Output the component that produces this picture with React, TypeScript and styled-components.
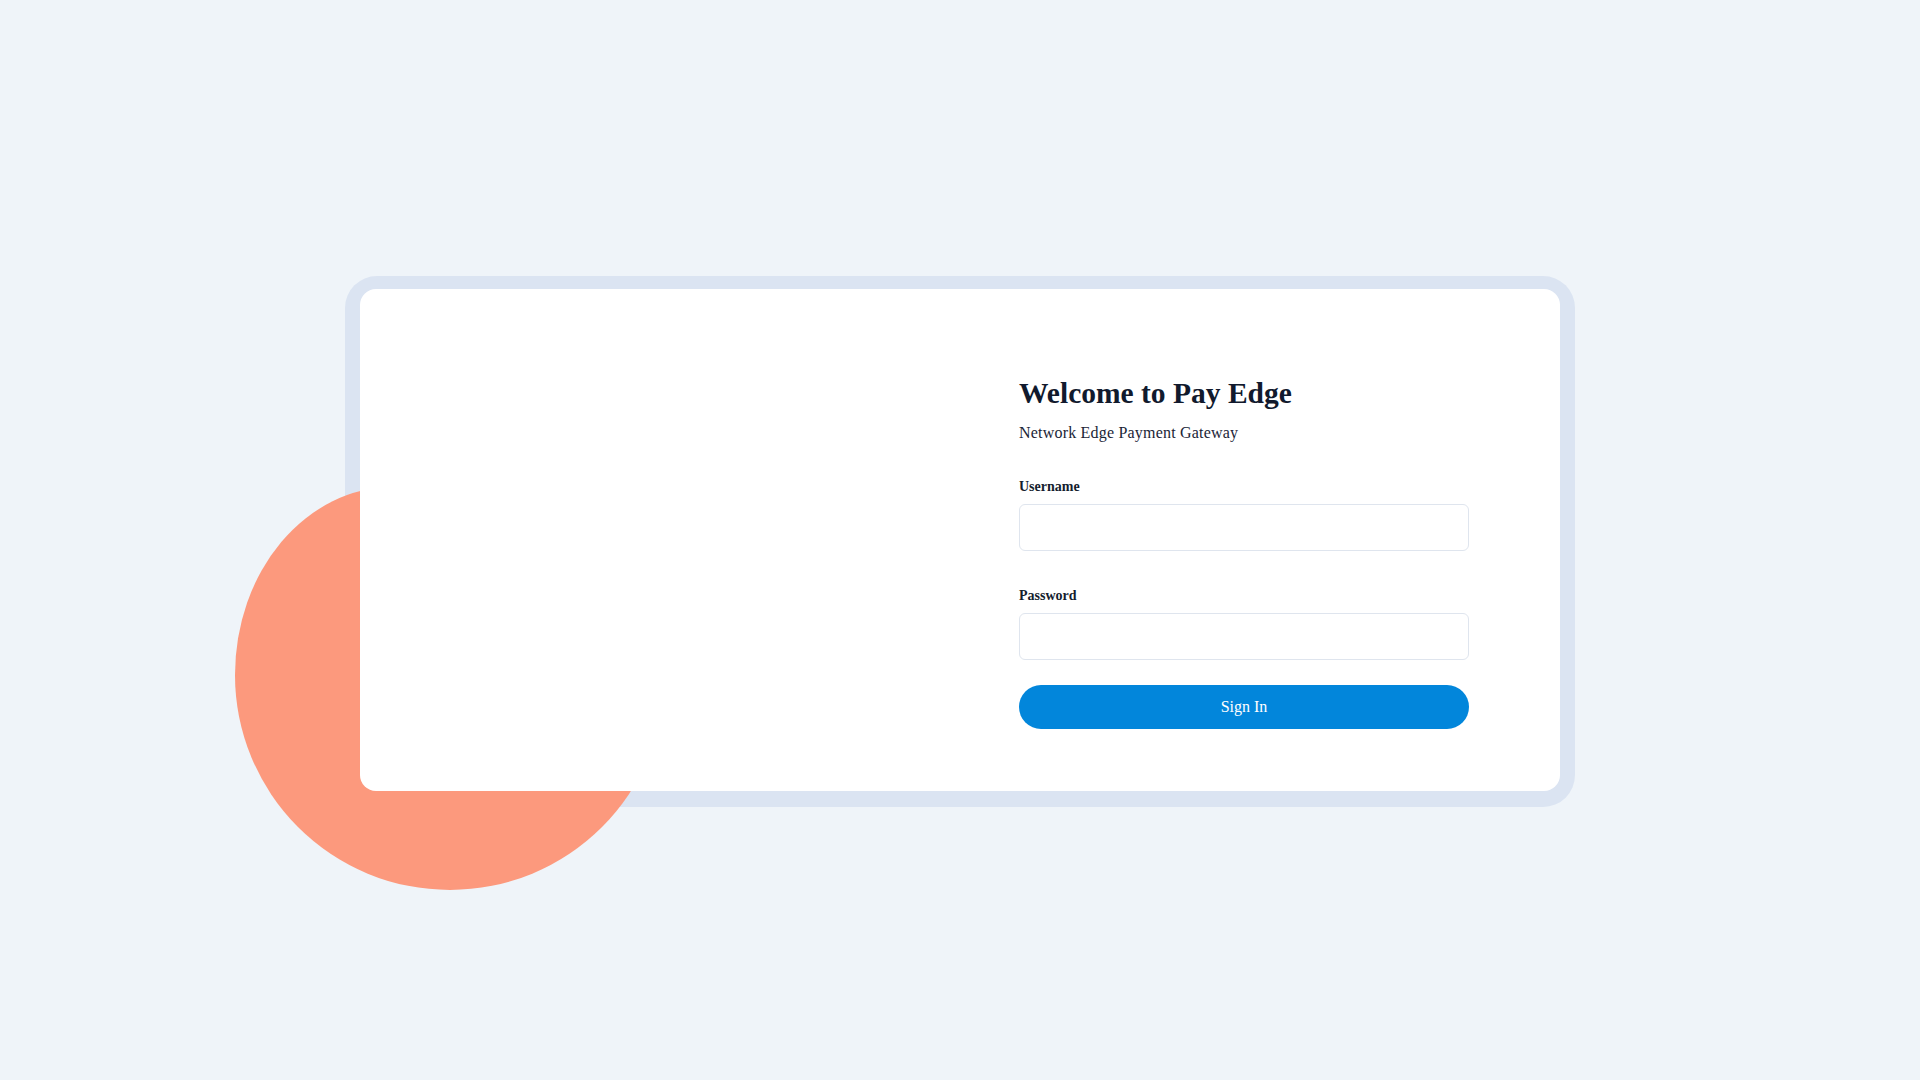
import React from "react";
import styled, { createGlobalStyle } from "styled-components";

const GlobalStyle = createGlobalStyle`
  * { box-sizing: border-box; }
  html, body { margin: 0; padding: 0; }
  body {
    background: #eff4f9;
    font-family: "Liberation Serif", "Times New Roman", serif;
  }
`;

const Page = styled.main`
  min-height: 100vh;
  padding-top: 3px;
  display: flex;
  align-items: center;
  justify-content: center;
`;

const Frame = styled.div`
  position: relative;
  padding: 13px 15px 16px 15px;
  background: #dbe4f2;
  border-radius: 32px;
`;

const Blob = styled.div`
  position: absolute;
  left: -110px;
  top: 211px;
  width: 430px;
  height: 403px;
  background: #fc997d;
  border-top-left-radius: 158px 188px;
  border-top-right-radius: 215px 188px;
  border-bottom-left-radius: 215px 215px;
  border-bottom-right-radius: 215px 215px;
`;

const Card = styled.section`
  position: relative;
  z-index: 1;
  width: 1200px;
  display: grid;
  grid-template-columns: 1fr 450px;
  padding: 86px 91px 62px 0;
  background: #ffffff;
  border-radius: 16px;
`;

const Aside = styled.div``;

const FormPanel = styled.div`
  display: flex;
  flex-direction: column;
`;

const Title = styled.h1`
  margin: 0;
  font-size: 29.5px;
  line-height: 36px;
  font-weight: 700;
  color: #111a2d;
`;

const Subtitle = styled.p`
  margin: 10px 0 0;
  font-size: 16px;
  line-height: 24px;
  letter-spacing: 0.2px;
  color: #1a2436;
`;

const Form = styled.form`
  margin-top: 32px;
  display: flex;
  flex-direction: column;
`;

const Field = styled.div<{ $gap?: number }>`
  display: flex;
  flex-direction: column;
  margin-bottom: ${(p) => p.$gap ?? 35}px;
`;

const Label = styled.label<{ $gap?: number }>`
  font-size: 14px;
  line-height: 20px;
  font-weight: 700;
  color: #141d2e;
  margin-bottom: ${(p) => p.$gap ?? 7}px;
`;

const Input = styled.input`
  height: 47px;
  width: 100%;
  border: 1px solid #dfe5ee;
  border-radius: 6px;
  background: #ffffff;
  padding: 0 14px;
  font-family: inherit;
  font-size: 16px;
  outline: none;
`;

const Button = styled.button`
  height: 44px;
  width: 100%;
  border: none;
  border-radius: 22px;
  background: #0286db;
  color: #ffffff;
  font-family: "Liberation Serif", "Times New Roman", serif;
  font-size: 16px;
  cursor: pointer;
`;

export default function App() {
  return (
    <>
      <GlobalStyle />
      <Page>
        <Frame>
          <Blob />
          <Card>
            <Aside />
            <FormPanel>
              <Title>Welcome to Pay Edge</Title>
              <Subtitle>Network Edge Payment Gateway</Subtitle>
              <Form onSubmit={(e) => e.preventDefault()}>
                <Field>
                  <Label htmlFor="username">Username</Label>
                  <Input id="username" type="text" />
                </Field>
                <Field $gap={25}>
                  <Label htmlFor="password">Password</Label>
                  <Input id="password" type="password" />
                </Field>
                <Button type="submit">Sign In</Button>
              </Form>
            </FormPanel>
          </Card>
        </Frame>
      </Page>
    </>
  );
}
